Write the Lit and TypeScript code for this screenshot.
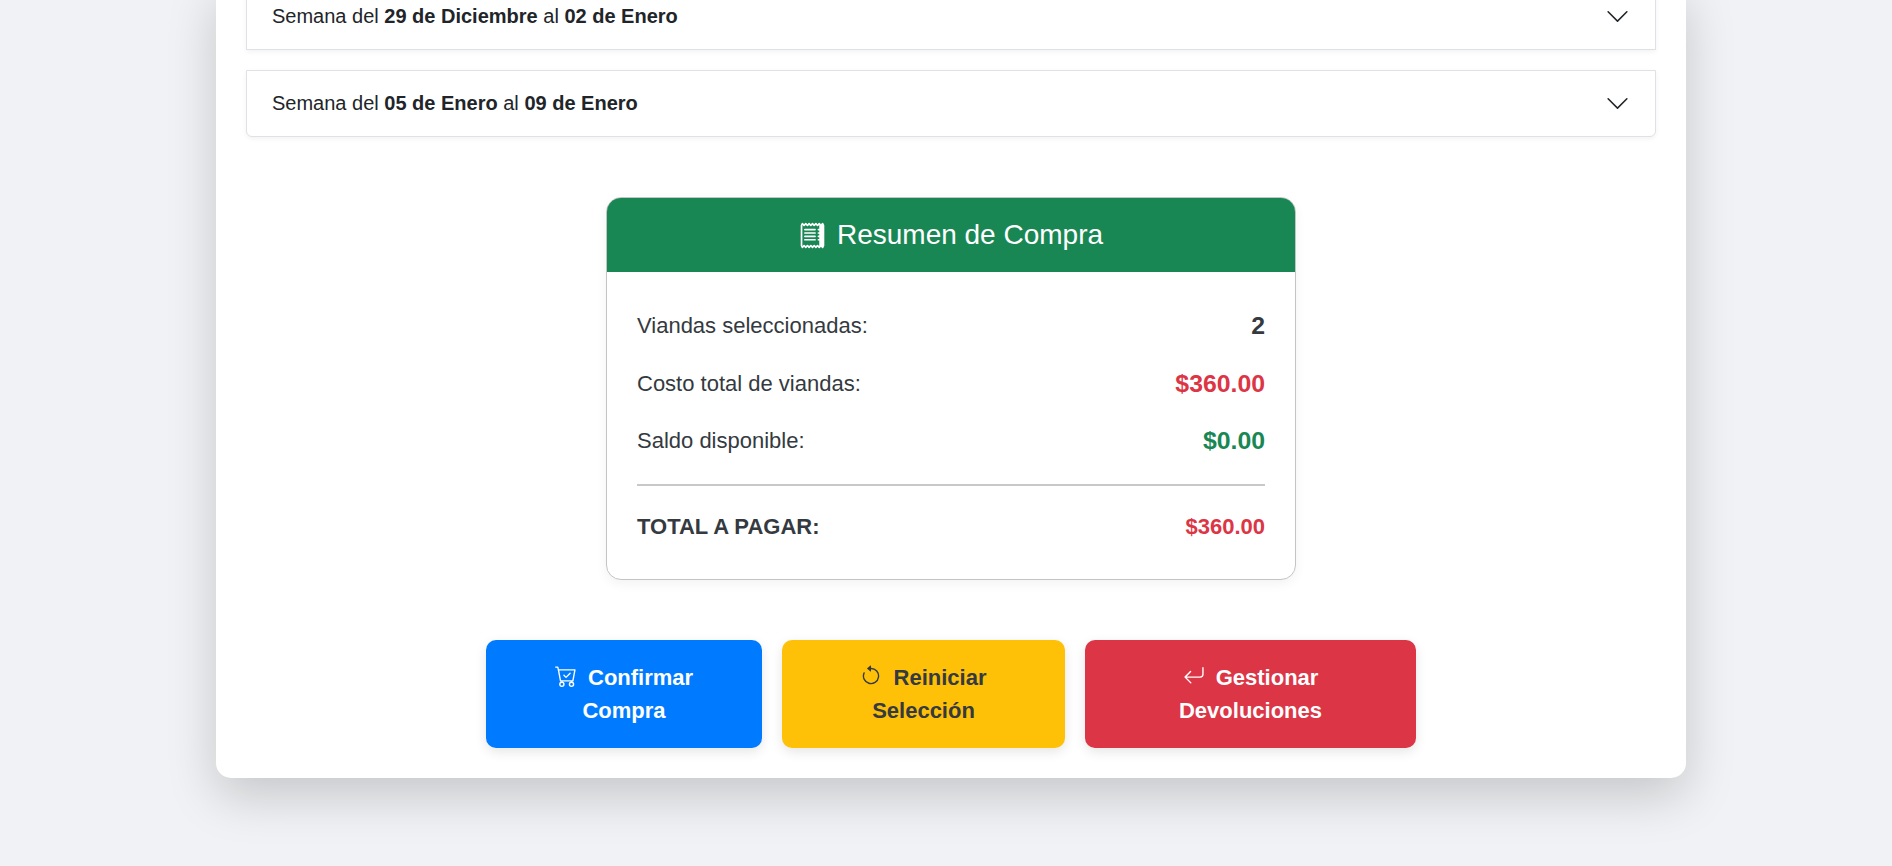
import { LitElement, html, css, svg } from "lit";
import { customElement } from "lit/decorators.js";

const chevron = svg`<path fill-rule="evenodd" d="M1.646 4.646a.5.5 0 0 1 .708 0L8 10.293l5.646-5.647a.5.5 0 0 1 .708.708l-6 6a.5.5 0 0 1-.708 0l-6-6a.5.5 0 0 1 0-.708z"/>`;
const receipt = svg`<path d="M1.92.506a.5.5 0 0 1 .434.14L3 1.293l.646-.647a.5.5 0 0 1 .708 0L5 1.293l.646-.647a.5.5 0 0 1 .708 0L7 1.293l.646-.647a.5.5 0 0 1 .708 0L9 1.293l.646-.647a.5.5 0 0 1 .708 0l.646.647.646-.647a.5.5 0 0 1 .708 0l.646.647.646-.647a.5.5 0 0 1 .801.13l.5 1A.5.5 0 0 1 15 2v12a.5.5 0 0 1-.053.224l-.5 1a.5.5 0 0 1-.8.13L13 14.707l-.646.647a.5.5 0 0 1-.708 0L11 14.707l-.646.647a.5.5 0 0 1-.708 0L9 14.707l-.646.647a.5.5 0 0 1-.708 0L7 14.707l-.646.647a.5.5 0 0 1-.708 0L5 14.707l-.646.647a.5.5 0 0 1-.708 0L3 14.707l-.646.647a.5.5 0 0 1-.801-.13l-.5-1A.5.5 0 0 1 1 14V2a.5.5 0 0 1 .053-.224l.5-1a.5.5 0 0 1 .367-.27zm.217 1.338L2 2.118v11.764l.137.274.51-.51a.5.5 0 0 1 .707 0l.646.647.646-.646a.5.5 0 0 1 .708 0l.646.646.646-.646a.5.5 0 0 1 .708 0l.646.646.646-.646a.5.5 0 0 1 .708 0l.646.646.646-.646a.5.5 0 0 1 .708 0l.509.509.137-.274V2.118l-.137-.274-.51.51a.5.5 0 0 1-.707 0L12 1.707l-.646.647a.5.5 0 0 1-.708 0L10 1.707l-.646.647a.5.5 0 0 1-.708 0L8 1.707l-.646.647a.5.5 0 0 1-.708 0L6 1.707l-.646.647a.5.5 0 0 1-.708 0L4 1.707l-.646.647a.5.5 0 0 1-.708 0l-.509-.51z"/><path d="M3 4.5a.5.5 0 0 1 .5-.5h6a.5.5 0 1 1 0 1h-6a.5.5 0 0 1-.5-.5zm0 2a.5.5 0 0 1 .5-.5h6a.5.5 0 1 1 0 1h-6a.5.5 0 0 1-.5-.5zm0 2a.5.5 0 0 1 .5-.5h6a.5.5 0 1 1 0 1h-6a.5.5 0 0 1-.5-.5zm0 2a.5.5 0 0 1 .5-.5h6a.5.5 0 0 1 0 1h-6a.5.5 0 0 1-.5-.5zm8-6a.5.5 0 0 1 .5-.5h1a.5.5 0 0 1 0 1h-1a.5.5 0 0 1-.5-.5zm0 2a.5.5 0 0 1 .5-.5h1a.5.5 0 0 1 0 1h-1a.5.5 0 0 1-.5-.5zm0 2a.5.5 0 0 1 .5-.5h1a.5.5 0 0 1 0 1h-1a.5.5 0 0 1-.5-.5zm0 2a.5.5 0 0 1 .5-.5h1a.5.5 0 0 1 0 1h-1a.5.5 0 0 1-.5-.5z"/>`;
const cart = svg`<path d="M11.354 6.354a.5.5 0 0 0-.708-.708L8 8.293 6.854 7.146a.5.5 0 1 0-.708.708l1.5 1.5a.5.5 0 0 0 .708 0l3-3z"/><path d="M.5 1a.5.5 0 0 0 0 1h1.11l.401 1.607 1.498 7.985A.5.5 0 0 0 4 12h1a2 2 0 1 0 0 4 2 2 0 0 0 0-4h7a2 2 0 1 0 0 4 2 2 0 0 0 0-4h1a.5.5 0 0 0 .491-.408l1.5-8A.5.5 0 0 0 14.5 3H2.89l-.405-1.621A.5.5 0 0 0 2 1H.5zm3.915 10L3.102 4h10.796l-1.313 7h-8.17zM6 14a1 1 0 1 1-2 0 1 1 0 0 1 2 0zm7 0a1 1 0 1 1-2 0 1 1 0 0 1 2 0z"/>`;
const reset = svg`<path fill-rule="evenodd" d="M8 3a5 5 0 1 1-4.546 2.914.5.5 0 0 0-.908-.417A6 6 0 1 0 8 2v1z"/><path d="M8 4.466V.534a.25.25 0 0 0-.41-.192L5.23 2.308a.25.25 0 0 0 0 .384l2.36 1.966A.25.25 0 0 0 8 4.466z"/>`;
const ret = svg`<path fill-rule="evenodd" d="M14.5 1.5a.5.5 0 0 1 .5.5v4.8a2.5 2.5 0 0 1-2.5 2.5H2.707l3.347 3.346a.5.5 0 0 1-.708.708l-4.2-4.2a.5.5 0 0 1 0-.708l4-4a.5.5 0 1 1 .708.708L2.707 8.3H12.5A1.5 1.5 0 0 0 14 6.8V2a.5.5 0 0 1 .5-.5z"/>`;

@customElement("app-root")
export class AppRoot extends LitElement {
  static styles = css`
    :host {
      display: block;
      height: 866px;
      overflow: hidden;
      padding-left: 10px;
      box-sizing: border-box;
      background: #f0f2f5;
      font-family: "Liberation Sans", Arial, sans-serif;
      color: #212529;
    }
    .sheet {
      width: 1470px;
      box-sizing: border-box;
      margin: -17px auto 0;
      padding: 0 30px 30px;
      background: #fff;
      border-radius: 0 0 15px 15px;
      box-shadow: 0 18px 50px rgba(0, 0, 0, 0.18);
    }
    .weeks {
      display: flex;
      flex-direction: column;
      gap: 20px;
    }
    .week {
      display: flex;
      align-items: center;
      justify-content: space-between;
      box-sizing: border-box;
      height: 67px;
      padding: 0 25px;
      font-size: 20px;
      background: #fff;
      border: 1px solid #dee2e6;
      box-shadow: 0 2px 5px rgba(0, 0, 0, 0.05);
    }
    .week:last-child {
      border-radius: 0 0 6px 6px;
    }
    .week b {
      font-weight: 700;
    }
    .chev {
      width: 25px;
      height: 25px;
      fill: #212529;
      flex: none;
    }
    .summary {
      width: 690px;
      box-sizing: border-box;
      margin: 60px auto 0;
      border: 1px solid #c4c4c4;
      border-radius: 15px;
      overflow: hidden;
      background: #fff;
      box-shadow: 0 4px 12px rgba(0, 0, 0, 0.05);
    }
    .head {
      display: flex;
      align-items: center;
      justify-content: center;
      gap: 11px;
      height: 74px;
      background: #198754;
      color: #fff;
      font-size: 28px;
    }
    .head svg {
      width: 27px;
      height: 27px;
      fill: #fff;
    }
    .body {
      padding: 36px 30px 36px;
    }
    .row {
      display: flex;
      align-items: center;
      justify-content: space-between;
      height: 36px;
      margin-bottom: 21.5px;
      font-size: 22px;
      color: #343a40;
    }
    .row:nth-child(3) {
      margin-bottom: 0;
    }
    .val {
      font-size: 24.8px;
      font-weight: 700;
    }
    .red {
      color: #dc3545;
    }
    .green {
      color: #198754;
    }
    .rule {
      height: 2px;
      margin: 25px 0;
      background: #c8c8c8;
    }
    .total {
      display: flex;
      align-items: center;
      justify-content: space-between;
      height: 32px;
      font-size: 22px;
      font-weight: 700;
      color: #343a40;
    }
    .actions {
      display: flex;
      justify-content: center;
      gap: 20px;
      margin-top: 60px;
    }
    .btn {
      box-sizing: border-box;
      height: 108px;
      padding: 0 40px;
      border: none;
      border-radius: 10px;
      font: 700 22px/33px "Liberation Sans", Arial, sans-serif;
      text-align: center;
      color: #fff;
      box-shadow: 0 4px 12px rgba(0, 0, 0, 0.1);
    }
    .btn svg {
      width: 22px;
      height: 22px;
      fill: currentColor;
      margin-right: 5px;
      vertical-align: -2px;
    }
    .blue {
      width: 276px;
      background: #007bff;
    }
    .yellow {
      width: 283px;
      background: #ffc107;
      color: #343a40;
    }
    .danger {
      width: 331px;
      background: #dc3545;
    }
  `;

  private week(a: string, b: string) {
    return html`<div class="week">
      <span>Semana del <b>${a}</b> al <b>${b}</b></span>
      <svg class="chev" viewBox="0 0 16 16">${chevron}</svg>
    </div>`;
  }

  render() {
    return html`<div class="sheet">
      <div class="weeks">
        ${this.week("29 de Diciembre", "02 de Enero")}
        ${this.week("05 de Enero", "09 de Enero")}
      </div>
      <section class="summary">
        <div class="head">
          <svg viewBox="0 0 16 16">${receipt}</svg>
          <span>Resumen de Compra</span>
        </div>
        <div class="body">
          <div class="row"><span>Viandas seleccionadas:</span><span class="val">2</span></div>
          <div class="row"><span>Costo total de viandas:</span><span class="val red">$360.00</span></div>
          <div class="row"><span>Saldo disponible:</span><span class="val green">$0.00</span></div>
          <div class="rule"></div>
          <div class="total"><span>TOTAL A PAGAR:</span><span class="red">$360.00</span></div>
        </div>
      </section>
      <div class="actions">
        <button class="btn blue"><svg viewBox="0 0 16 16">${cart}</svg> Confirmar Compra</button>
        <button class="btn yellow"><svg viewBox="0 0 16 16">${reset}</svg> Reiniciar Selección</button>
        <button class="btn danger"><svg viewBox="0 0 16 16">${ret}</svg> Gestionar Devoluciones</button>
      </div>
    </div>`;
  }
}
